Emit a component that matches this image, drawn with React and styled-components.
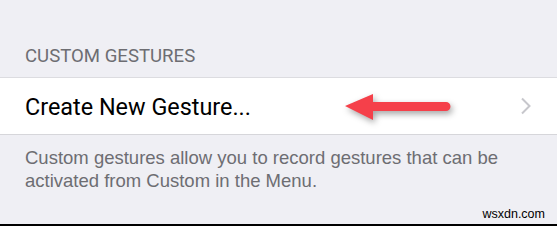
import styled, { createGlobalStyle } from "styled-components";

const GlobalStyle = createGlobalStyle`
  html, body {
    margin: 0;
    padding: 0;
    background: #efeff4;
  }
`;

const Page = styled.div`
  width: 557px;
  height: 226px;
  box-sizing: border-box;
  background: #efeff4;
  border-bottom: 2px solid #000;
  display: flex;
  flex-direction: column;
  font-family: "Liberation Sans", Arial, sans-serif;
`;

const SectionHeader = styled.div`
  height: 77px;
  box-sizing: border-box;
  padding: 46px 0 0 25px;
  font-family: Roboto, "Liberation Sans", sans-serif;
  font-size: 18.6px;
  line-height: 20px;
  color: #6d6d72;
`;

const Row = styled.div`
  position: relative;
  height: 58px;
  box-sizing: border-box;
  background: #fff;
  border-top: 1px solid #dcdce0;
  border-bottom: 1px solid #d6d6da;
  display: flex;
  align-items: center;
  justify-content: space-between;
  padding: 0 25px 0 25px;
`;

const RowLabel = styled.span`
  font-family: Roboto, "Liberation Sans", sans-serif;
  font-size: 23.4px;
  color: #000;
  padding-top: 2px;
`;

const Chevron = styled.svg`
  width: 12px;
  height: 18px;
`;

const Arrow = styled.svg`
  position: absolute;
  left: 340px;
  top: 12px;
  width: 120px;
  height: 34px;
  overflow: visible;
  filter: drop-shadow(2px 3px 3px rgba(0, 0, 0, 0.35));
`;

const Footnote = styled.p`
  margin: 0;
  padding: 11px 25px 0 25px;
  font-size: 18.5px;
  line-height: 23px;
  color: #6d6d72;
`;

const Watermark = styled.div`
  margin-top: auto;
  align-self: flex-end;
  padding: 0 12px 3px 0;
  font-size: 12.5px;
  color: #000;
`;

const App = () => {
  return (
    <>
      <GlobalStyle />
      <Page>
        <SectionHeader>CUSTOM GESTURES</SectionHeader>
        <Row>
          <RowLabel>Create New Gesture...</RowLabel>
          <Chevron viewBox="0 0 12 18">
            <path d="M2 1.5 L9.5 9 L2 16.5" fill="none" stroke="#c7c7cc" strokeWidth="2" />
          </Chevron>
          <Arrow viewBox="0 0 120 34">
            <path d="M5 16 L33 4 L33 12 L106 12 A4.5 4.5 0 0 1 106 21 L33 21 L33 30 Z" fill="#f5404a" />
          </Arrow>
        </Row>
        <Footnote>
          Custom gestures allow you to record gestures that can be activated from Custom in the Menu.
        </Footnote>
        <Watermark>wsxdn.com</Watermark>
      </Page>
    </>
  );
};

export default App;
